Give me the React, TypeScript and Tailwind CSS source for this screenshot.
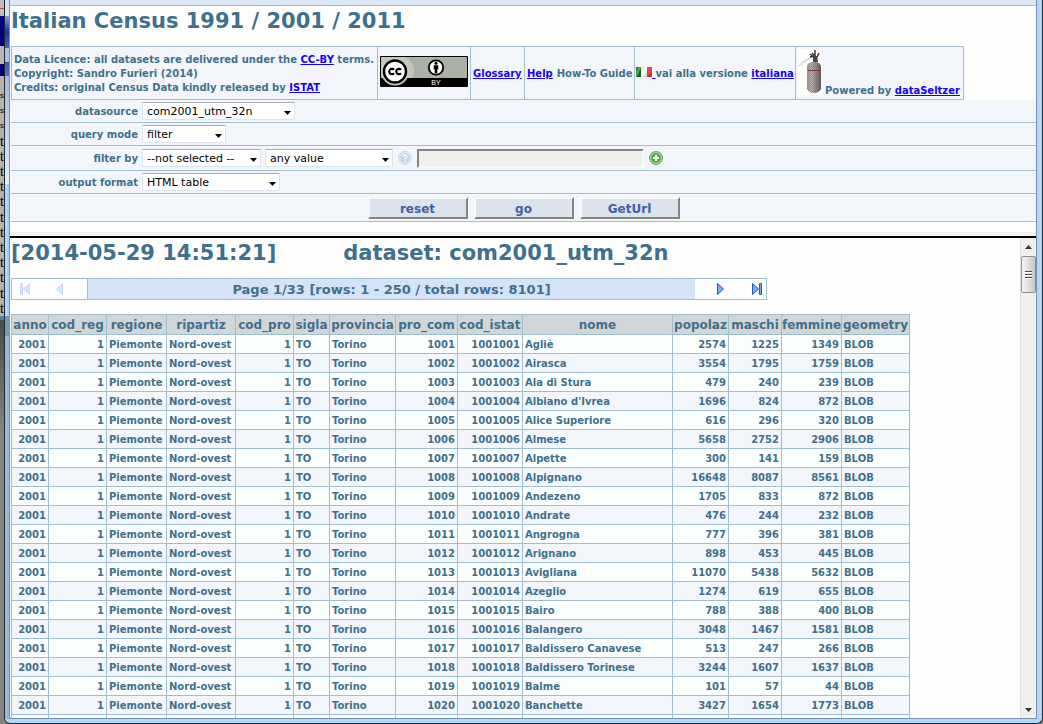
import type { ReactNode } from 'react';

const columns = [
  { name: 'anno', width: 'w-[37px]', align: 'text-right' },
  { name: 'cod_reg', width: 'w-[58px]', align: 'text-right' },
  { name: 'regione', width: 'w-[60px]', align: 'text-left' },
  { name: 'ripartiz', width: 'w-[69px]', align: 'text-left' },
  { name: 'cod_pro', width: 'w-[58px]', align: 'text-right' },
  { name: 'sigla', width: 'w-[36px]', align: 'text-left' },
  { name: 'provincia', width: 'w-[66px]', align: 'text-left' },
  { name: 'pro_com', width: 'w-[62px]', align: 'text-right' },
  { name: 'cod_istat', width: 'w-[65px]', align: 'text-right' },
  { name: 'nome', width: 'w-[150px]', align: 'text-left' },
  { name: 'popolaz', width: 'w-[56px]', align: 'text-right' },
  { name: 'maschi', width: 'w-[53px]', align: 'text-right' },
  { name: 'femmine', width: 'w-[60px]', align: 'text-right' },
  { name: 'geometry', width: 'w-[68px]', align: 'text-left' },
];

const towns: [string, number, number, number][] = [
  ['Agliè', 2574, 1225, 1349],
  ['Airasca', 3554, 1795, 1759],
  ['Ala di Stura', 479, 240, 239],
  ["Albiano d'Ivrea", 1696, 824, 872],
  ['Alice Superiore', 616, 296, 320],
  ['Almese', 5658, 2752, 2906],
  ['Alpette', 300, 141, 159],
  ['Alpignano', 16648, 8087, 8561],
  ['Andezeno', 1705, 833, 872],
  ['Andrate', 476, 244, 232],
  ['Angrogna', 777, 396, 381],
  ['Arignano', 898, 453, 445],
  ['Avigliana', 11070, 5438, 5632],
  ['Azeglio', 1274, 619, 655],
  ['Bairo', 788, 388, 400],
  ['Balangero', 3048, 1467, 1581],
  ['Baldissero Canavese', 513, 247, 266],
  ['Baldissero Torinese', 3244, 1607, 1637],
  ['Balme', 101, 57, 44],
  ['Banchette', 3427, 1654, 1773],
];

function Link({ children }: { children: ReactNode }) {
  return (
    <a href="#" className="text-[#1400ff] underline">
      {children}
    </a>
  );
}

function CcBadge() {
  return (
    <svg width="88" height="31" viewBox="0 0 88 31" role="img" aria-label="Creative Commons BY">
      <rect width="88" height="31" rx="1" fill="#000" />
      <rect x="1" y="1" width="86" height="21" fill="#abb1a6" />
      <path d="M1 1h24c6 3 9 8 9 14 0 3-1 5-2 7H1z" fill="#c3c7bf" />
      <circle cx="15" cy="15.500" r="14" fill="#c9ccc6" />
      <circle cx="15" cy="15.500" r="11" fill="#fff" stroke="#000" strokeWidth="2.400" />
      <path
        d="M14 13.700a2.700 2.700 0 1 0 0 3.600M21 13.700a2.700 2.700 0 1 0 0 3.600"
        fill="none"
        stroke="#000"
        strokeWidth="2.200"
      />
      <circle cx="56" cy="11.500" r="7.200" fill="#fff" stroke="#000" strokeWidth="1.800" />
      <circle cx="56" cy="7.300" r="1.500" />
      <path d="M53.700 9.300h4.600v4h-1v4h-2.600v-4h-1z" />
      <text x="56" y="29" textAnchor="middle" fill="#fff" fontSize="7" fontWeight="400" fontFamily="Liberation Sans, sans-serif">
        BY
      </text>
    </svg>
  );
}

function Flag() {
  return (
    <svg width="16" height="10" viewBox="0 0 16 10" className="inline-block align-baseline" aria-hidden="true">
      <defs>
        <linearGradient id="fg" x1="0" y1="0" x2="1" y2="1">
          <stop offset="0" stopColor="#0d6b1d" />
          <stop offset=".45" stopColor="#5fae62" />
          <stop offset=".6" stopColor="#14701f" />
          <stop offset="1" stopColor="#0c5c18" />
        </linearGradient>
        <linearGradient id="fw" x1="0" y1="0" x2="1" y2="1">
          <stop offset="0" stopColor="#d4d4d4" />
          <stop offset=".5" stopColor="#fff" />
          <stop offset="1" stopColor="#c4c4c4" />
        </linearGradient>
      </defs>
      <rect width="5" height="10" fill="url(#fg)" />
      <rect x="5" width="6" height="10" fill="url(#fw)" />
      <rect x="11" width="5" height="10" fill="#e84545" />
      <path d="M11 10l5-5v5z" fill="#c02a2a" />
    </svg>
  );
}

function Siphon() {
  return (
    <svg width="24" height="46" viewBox="0 0 24 46" aria-hidden="true">
      <defs>
        <linearGradient id="bottle" x1="0" x2="1" y1="0" y2="0">
          <stop offset="0" stopColor="#a39a98" />
          <stop offset=".3" stopColor="#b9b2b0" />
          <stop offset=".7" stopColor="#8c8484" />
          <stop offset="1" stopColor="#5d5757" />
        </linearGradient>
        <pattern id="mesh" width="2" height="2" patternUnits="userSpaceOnUse">
          <path d="M0 0h1v1H0zM1 1h1v1H1z" fill="#5e5555" fillOpacity=".35" />
        </pattern>
      </defs>
      <rect width="24" height="46" fill="#fdfdfb" />
      <path d="M1 17l4-4 8-4M3 14l10-6" stroke="#bcd2d8" fill="none" />
      <path d="M3 17l7-6" stroke="#e3dcae" fill="none" strokeDasharray="2 1" />
      <path d="M12 5l4 3h3l2-4M17 1v9M14 4l3 3M12 8l5-1" stroke="#37302f" strokeWidth="1.400" fill="none" />
      <path d="M15 7h4l1 6h-5z" fill="#4b4444" />
      <path d="M9 18q0-4 5-5h4q5 1 5 5v22q-2 4-7 4t-7-4z" fill="url(#bottle)" />
      <path d="M9 18q0-4 5-5h4q5 1 5 5v22q-2 4-7 4t-7-4z" fill="url(#mesh)" />
      <path d="M10 21.500h13" stroke="#8d3035" />
    </svg>
  );
}

function HelpIcon() {
  return (
    <svg width="14" height="14" viewBox="0 0 14 14" role="img" aria-label="Help">
      <circle cx="7" cy="7" r="6.500" fill="#e4eaf6" stroke="#cdd8ea" />
      <circle cx="7" cy="7" r="4.800" fill="#c9d5ec" />
      <path
        d="M5.200 5.600Q5.300 4 7 4t1.800 1.500Q8.800 6.400 7 7.500v.7M7 9.200v1.200"
        fill="none"
        stroke="#f7faff"
        strokeWidth="1.400"
      />
    </svg>
  );
}

function AddIcon() {
  return (
    <svg width="14" height="14" viewBox="0 0 14 14" aria-hidden="true">
      <circle cx="7" cy="7" r="6.500" fill="#a5d99a" stroke="#5fa757" />
      <circle cx="7" cy="7" r="5" fill="#5bb04c" />
      <path d="M7 4v6M4 7h6" stroke="#fff" strokeWidth="2" />
    </svg>
  );
}

function PagerIcon({ kind }: { kind: 'first' | 'prev' | 'next' | 'last' }) {
  const faded = kind === 'first' || kind === 'prev';
  const fill = faded ? '#dbe4f8' : '#7fabf0';
  const stroke = faded ? '#cbd8f1' : '#2457be';
  return (
    <svg width="12" height="12" viewBox="0 0 12 12" fill={fill} stroke={stroke} aria-hidden="true">
      {kind === 'first' && <path d="M1.500.5h2v11h-2zM10.500.5v11L4.500 6z" />}
      {kind === 'prev' && <path d="M8.500.5v11L2.500 6z" />}
      {kind === 'next' && <path d="M2.500.5v11L8.500 6z" />}
      {kind === 'last' && <path d="M1.500.5v11L7.500 6zM8.500.5h2v11h-2z" />}
    </svg>
  );
}

function Select({ id, value, width, label }: { id: string; value: string; width: string; label?: string }) {
  return (
    <span className={`relative inline-flex ${width}`}>
      <select
        id={id}
        aria-label={label}
        className="h-[18px] w-full appearance-none border border-[#dde5f0] border-t-[#abadb3] bg-white pt-0.5 pl-1 text-[11px] leading-[14px] font-normal text-black"
      >
        <option>{value}</option>
      </select>
      <svg width="7" height="4" viewBox="0 0 7 4" className="pointer-events-none absolute top-[9px] right-1" aria-hidden="true">
        <path d="M0 0h7L3.500 4z" />
      </svg>
    </span>
  );
}

function FormRow({ id, label, height, children }: { id: string; label: string; height: string; children: ReactNode }) {
  return (
    <div className={`flex items-center border-b border-[#9fbfcf] ${height}`}>
      <label htmlFor={id} className="w-[127px] pt-0.5 text-right">
        {label}
      </label>
      <div className="ml-1 flex items-center">{children}</div>
    </div>
  );
}

function Button({ children }: { children: ReactNode }) {
  return (
    <button
      type="button"
      className="h-[22px] w-[100px] border-2 border-t-[#f6f9fa] border-r-[#858580] border-b-[#858580] border-l-[#f6f9fa] bg-[#dce3ed] pt-0.5 text-[12px] leading-4 font-bold text-[#4060a8]"
    >
      {children}
    </button>
  );
}

function Scrollbar() {
  return (
    <div className="flex w-4 shrink-0 flex-col items-center border-l border-[#e2e2e0] bg-[#eff0ee]" aria-hidden="true">
      <div className="flex h-[18px] items-center">
        <svg width="7" height="4" viewBox="0 0 7 4">
          <path d="M0 4h7L3.500 0z" fill="#333" />
        </svg>
      </div>
      <div className="flex h-[37px] w-[15px] items-center justify-center rounded-xs border border-[#8e8e8e] bg-linear-to-r from-[#f5f5f5] to-[#c8c8ca]">
        <svg width="7" height="8" viewBox="0 0 7 8">
          <path d="M0 .5h7M0 3.500h7M0 6.500h7" stroke="#4a4a4a" />
          <path d="M0 1.500h7M0 4.500h7M0 7.500h7" stroke="#fff" />
        </svg>
      </div>
      <div className="flex grow items-end pb-1.5">
        <svg width="7" height="4" viewBox="0 0 7 4">
          <path d="M0 0h7L3.500 4z" fill="#333" />
        </svg>
      </div>
    </div>
  );
}

/* Sliver of the window that lies behind this one. */
function BackWindow() {
  const lines = ['s', 's', 's', 't', 't', 't', 't', 't', 't', 't', 't', 't', 't', 't', 't'];
  return (
    <div className="w-1 shrink-0 overflow-hidden bg-[#85837e]" aria-hidden="true">
      <div className="h-4 bg-[#c0bdb8]">
        <div className="h-[9px] border-b border-[#c04848]" />
      </div>
      <div className="h-[30px] bg-[#000080]" />
      <div className="h-[18px] bg-[#b9b7b2]" />
      <div className="h-3 bg-[#000080]" />
      <div className="flex h-[240px] flex-col justify-between bg-[#b5b3ae] pt-3 font-['Liberation_Sans',sans-serif] leading-[15px] font-normal text-black">
        {lines.map((c, i) => (
          <span key={i} className={c === 's' ? 'text-[8px]' : 'text-[13px]'}>
            {c}
          </span>
        ))}
      </div>
      <div className="h-1 bg-[#5580a0]" />
      <div className="h-28 bg-linear-to-b from-[#4c4b48] to-[#85837e]" />
    </div>
  );
}

/* Translucent left edge of the window frame. */
function LeftFrame() {
  return (
    <div className="flex w-1 shrink-0 flex-col bg-[#9ab6d8]" aria-hidden="true">
      <div className="h-4 bg-[#d3e0f0]" />
      <div className="h-8 bg-linear-to-b from-[#8c9fd0] via-[#1c3592] to-[#4d68b0]" />
      <div className="h-3.5 bg-[#a8c2ea]" />
      <div className="h-3.5 bg-linear-to-b from-[#4058ac] to-[#5c74bc]" />
      <div className="h-[108px] bg-linear-to-b from-[#a5b8da] to-[#e3edf8]" />
      <div className="h-[132px] bg-linear-to-r from-[#bcdcfc] to-[#a2cbf6]" />
      <div className="h-5 bg-[#7b97b6]" />
    </div>
  );
}

export default function App() {
  const cell = 'border border-[#9fbfcf]';
  return (
    <div className="flex h-screen overflow-hidden bg-[#85837e] font-['DejaVu_Sans',Verdana,sans-serif] text-[10px] leading-[14px] font-bold text-[#3f708c]">
      <BackWindow />
      <div className="flex min-w-0 grow flex-col overflow-hidden rounded-b-md border-x border-b border-[#1d2a36] bg-[#b5d5fa]">
        <div className="flex min-h-0 grow">
          <LeftFrame />
          <main className="flex min-w-0 grow flex-col border-x border-b border-[#7391b0] bg-[#fdfefc]">
            <div className="h-1.5 shrink-0 border-b border-[#a4b4cc] bg-[#dce8f6]" />
            <header className="pl-px">
              <h1 className="h-10 pt-[3px] text-[21px] leading-6">Italian Census 1991 / 2001 / 2011</h1>
              <div className="bg-[#f2f6fa]">
                <div className="bg-[#fdfefc]">
                  <div className="flex h-[54px] w-fit divide-x divide-[#9fbfcf] border border-[#9fbfcf] bg-[#f2f6fa] whitespace-nowrap">
                    <p className="w-[366px] self-stretch py-1.5 pl-0.5">
                      Data Licence: all datasets are delivered under the <Link>CC-BY</Link> terms.
                      <br />
                      Copyright: Sandro Furieri (2014)
                      <br />
                      Credits: original Census Data kindly released by <Link>ISTAT</Link>
                    </p>
                    <a href="#" className="flex w-[93px] items-center px-0.5 pb-[3px]">
                      <CcBadge />
                    </a>
                    <div className="flex w-[54px] items-center px-0.5 pt-0.5">
                      <Link>Glossary</Link>
                    </div>
                    <div className="flex w-[110px] items-center gap-1 px-0.5 pt-0.5">
                      <Link>Help</Link> How-To Guide
                    </div>
                    <div className="flex w-[161px] items-center px-px pt-0.5">
                      <span>
                        <Link>
                          <Flag />{' '}
                        </Link>
                        vai alla versione <Link>italiana</Link>
                      </span>
                    </div>
                    <div className="flex w-[167px] items-start gap-[3px] px-0.5 pt-0.5">
                      <Siphon />
                      <span className="self-end pb-px">
                        Powered by <Link>dataSeltzer</Link>
                      </span>
                    </div>
                  </div>
                </div>
                <form>
                  <FormRow id="datasource" label="datasource" height="h-[23px]">
                    <Select id="datasource" value="com2001_utm_32n" width="w-[153px]" />
                  </FormRow>
                  <FormRow id="mode" label="query mode" height="h-[23px]">
                    <Select id="mode" value="filter" width="w-[84px]" />
                  </FormRow>
                  <FormRow id="field" label="filter by" height="h-[25px]">
                    <Select id="field" value="--not selected --" width="w-[119px]" />
                    <span className="ml-1 flex items-center">
                      <Select id="operator" label="operator" value="any value" width="w-[128px]" />
                    </span>
                    <span className="mx-[5px]">
                      <HelpIcon />
                    </span>
                    <input
                      type="text"
                      disabled
                      aria-label="filter value"
                      className="h-[19px] w-[227px] border-2 border-t-[#858580] border-r-[#fafbf9] border-b-[#fafbf9] border-l-[#858580] bg-[#eff0ee]"
                    />
                    <button type="button" aria-label="add filter" className="ml-[5px]">
                      <AddIcon />
                    </button>
                  </FormRow>
                  <FormRow id="format" label="output format" height="h-[23px]">
                    <Select id="format" value="HTML table" width="w-[138px]" />
                  </FormRow>
                  <div className="flex h-7 items-center justify-center gap-1.5 border-b border-[#9fbfcf]">
                    <Button>reset</Button>
                    <Button>go</Button>
                    <Button>GetUrl</Button>
                  </div>
                </form>
              </div>
            </header>
            <div className="mt-2.5 h-1.5 shrink-0 border-t border-b-2 border-t-[#ededed] border-b-black bg-[#f4f4f2]" />
            <div className="flex min-h-0 grow">
              <section className="min-w-0 grow overflow-hidden pl-px">
                <h2 className="flex h-10 gap-[67px] pt-[3px] text-[21px] leading-6 whitespace-nowrap">
                  <span>[2014-05-29 14:51:21]</span>
                  <span>dataset: com2001_utm_32n</span>
                </h2>
                <nav className="flex h-[22px] w-[756px] border border-[#9fbfcf] text-[13px]">
                  <div className="flex w-[76px] items-center border-r border-[#9fbfcf]">
                    <button type="button" disabled aria-label="first page" className="ml-[7px]">
                      <PagerIcon kind="first" />
                    </button>
                    <button type="button" disabled aria-label="previous page" className="ml-[23px]">
                      <PagerIcon kind="prev" />
                    </button>
                  </div>
                  <p className="flex grow items-center justify-center bg-[#d5e3f9] pt-px">
                    Page 1/33 [rows: 1 - 250 / total rows: 8101]
                  </p>
                  <div className="flex w-[71px] items-center justify-end gap-6 pr-[3px]">
                    <button type="button" aria-label="next page">
                      <PagerIcon kind="next" />
                    </button>
                    <button type="button" aria-label="last page">
                      <PagerIcon kind="last" />
                    </button>
                  </div>
                </nav>
                <table className="mt-3.5 w-[899px] table-fixed border-collapse whitespace-nowrap">
                  <colgroup>
                    {columns.map((c) => (
                      <col key={c.name} className={c.width} />
                    ))}
                  </colgroup>
                  <thead>
                    <tr className="h-5 bg-[#d1d6d9] text-[12px]">
                      {columns.map((c) => (
                        <th key={c.name} className={`${cell} p-0`}>
                          {c.name}
                        </th>
                      ))}
                    </tr>
                  </thead>
                  <tbody>
                    {towns.map(([name, total, male, female], i) => {
                      const values = [2001, 1, 'Piemonte', 'Nord-ovest', 1, 'TO', 'Torino', 1001 + i, 1001001 + i, name, total, male, female, 'BLOB'];
                      return (
                        <tr key={name} className="h-[19px] odd:bg-[#fafffe] even:bg-[#f2f6fa]">
                          {values.map((v, j) => (
                            <td key={columns[j].name} className={`${cell} px-0.5 pt-0.5 pb-0 ${columns[j].align}`}>
                              {v}
                            </td>
                          ))}
                        </tr>
                      );
                    })}
                    <tr className="h-[19px] bg-[#fafffe]">
                      {columns.map((c) => (
                        <td key={c.name} className={cell} />
                      ))}
                    </tr>
                  </tbody>
                </table>
              </section>
              <Scrollbar />
            </div>
          </main>
          <div className="w-[5px] shrink-0" />
        </div>
        <div className="h-1 shrink-0" />
      </div>
    </div>
  );
}
